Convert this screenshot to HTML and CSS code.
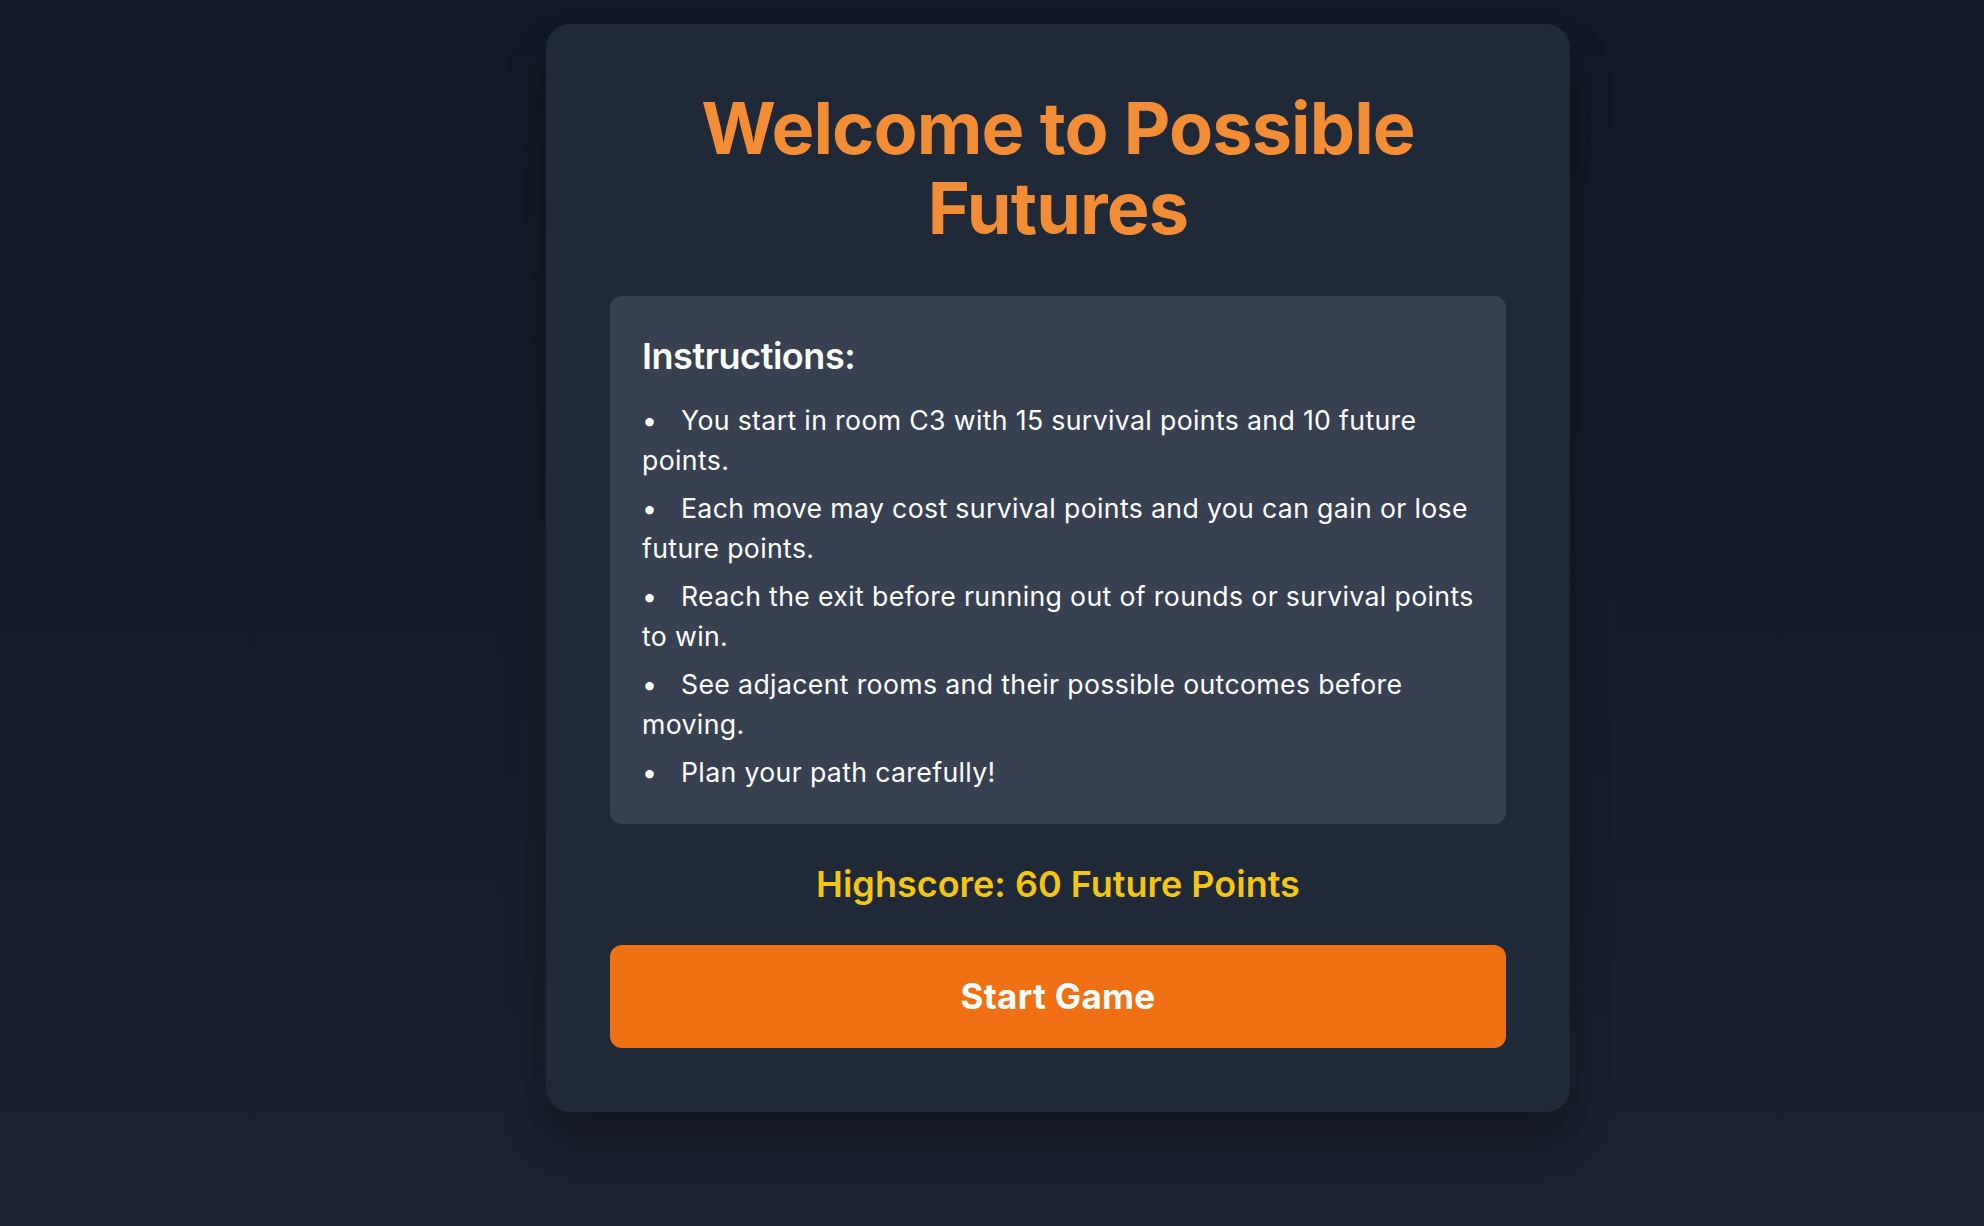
FILE: index.html
```html
<!DOCTYPE html>
<html lang="en">
<head>
<meta charset="utf-8">
<title>Possible Futures</title>
<link rel="stylesheet" href="styles.css">
</head>
<body>
<div class="page">
  <main class="card">
    <h1 class="title">Welcome to Possible Futures</h1>
    <section class="panel">
      <h2 class="panel-title">Instructions:</h2>
      <ul class="rules">
        <li>You start in room C3 with 15 survival points and 10 future points.</li>
        <li>Each move may cost survival points and you can gain or lose future points.</li>
        <li>Reach the exit before running out of rounds or survival points to win.</li>
        <li>See adjacent rooms and their possible outcomes before moving.</li>
        <li>Plan your path carefully!</li>
      </ul>
    </section>
    <p class="highscore">Highscore: 60 Future Points</p>
    <button class="start" type="button">Start Game</button>
  </main>
</div>
</body>
</html>
```
FILE: styles.css
```css
html, body {
  margin: 0;
  padding: 0;
}
body {
  min-height: 100vh;
  background: linear-gradient(to bottom, #111827 0%, #1b2131 100%);
  font-family: Inter, "Noto Sans", "Liberation Sans", sans-serif;
  color: #ffffff;
}
.page {
  display: flex;
  justify-content: center;
  align-items: flex-start;
  padding: 24px 0 0 132px;
  min-height: 1226px;
  box-sizing: border-box;
}
.card {
  width: 1024px;
  box-sizing: border-box;
  padding: 64px;
  background: #1f2937;
  border-radius: 24px;
  box-shadow: 0 25px 50px -12px rgba(0, 0, 0, 0.45);
}
.title {
  margin: 0 0 48px;
  font-size: 72px;
  line-height: 80px;
  font-weight: 700;
  color: #f28c35;
  text-align: center;
  letter-spacing: -0.9px;
}
.panel {
  background: #374151;
  border-radius: 12px;
  padding: 32px;
}
.panel-title {
  margin: 0 0 16px;
  font-size: 36px;
  line-height: 56px;
  font-weight: 600;
  color: #ffffff;
  letter-spacing: -0.45px;
}
.rules {
  margin: 0;
  padding: 0;
  list-style: none;
}
.rules li {
  font-size: 26.67px;
  line-height: 40px;
  color: #ffffff;
  letter-spacing: 0.35px;
}
.rules li + li {
  margin-top: 8px;
}
.rules li::before {
  content: "•";
  display: inline-block;
  width: 39px;
  letter-spacing: 0;
}
.highscore {
  margin: 32px 0 33px;
  font-size: 36px;
  line-height: 56px;
  font-weight: 600;
  color: #f4c60f;
  text-align: center;
}
.start {
  display: block;
  width: 100%;
  border: 0;
  border-radius: 12px;
  padding: 32px;
  background: #f07114;
  color: #ffffff;
  font-family: inherit;
  font-size: 35px;
  line-height: 39px;
  font-weight: 700;
  letter-spacing: 0.35px;
  cursor: pointer;
}
```
